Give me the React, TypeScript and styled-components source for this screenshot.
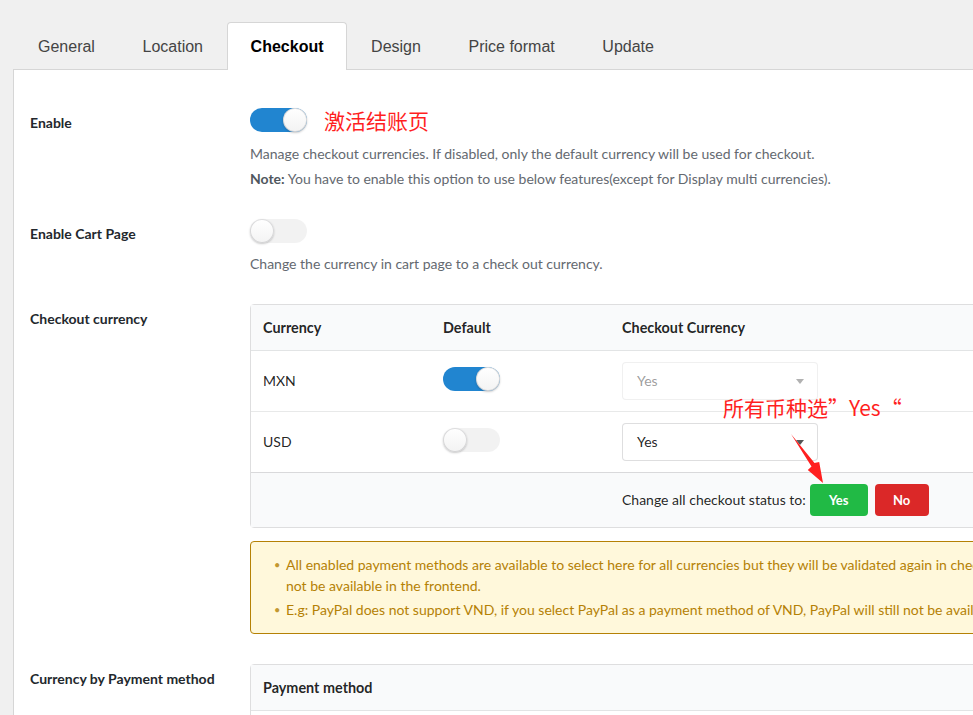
import React from "react";
import styled, {createGlobalStyle} from "styled-components";

const GlobalStyle = createGlobalStyle`
body{
  margin: 0;
  background: #f0f0f0;
  overflow: hidden;
  font-family: Lato, "Noto Sans", sans-serif;
  font-size: 14px;
  color: #23282d;
}
*{box-sizing: border-box;}
`;

const Page = styled.div`
width: 1400px;
padding: 22px 0 0 13px;
`;

const TabBar = styled.ul`
display: flex;
margin: 0 0 -1px;
padding: 0 0 0 1px;
list-style: none;
position: relative;
z-index: 1;
`;

const Tab = styled.li<{$active?: boolean}>`
height: 48px;
padding: 0 22.6px 0 23px;
display: flex;
align-items: center;
font-family: "Liberation Sans", Arial, sans-serif;
font-size: 16px;
color: ${p => p.$active ? "#000" : "#444"};
font-weight: ${p => p.$active ? 700 : 400};
background: ${p => p.$active ? "#fff" : "transparent"};
border: 1px solid ${p => p.$active ? "#d6d6d6" : "transparent"};
border-bottom: none;
border-radius: 4px 4px 0 0;
`;

const Panel = styled.div`
background: #fff;
border: 1px solid #d6d6d6;
padding: 38px 16px 60px;
display: flex;
flex-direction: column;
gap: 30px;
`;

const FieldRow = styled.div`
display: grid;
grid-template-columns: 220px 1fr;
`;

const Label = styled.div`
margin-top: 5px;
font-weight: 700;
font-size: 14px;
line-height: 20px;
color: #23282d;
`;

const Field = styled.div`
display: flex;
flex-direction: column;
`;

const ToggleLine = styled.div`
display: flex;
align-items: center;
height: 24px;
gap: 17px;
`;

const Toggle = styled.span<{$on?: boolean}>`
position: relative;
display: inline-block;
flex: none;
width: 57px;
height: 24px;
border-radius: 12px;
background: ${p => p.$on ? "#2185d0" : "rgba(0,0,0,.05)"};
&::after{
  content: "";
  position: absolute;
  top: 0;
  left: ${p => p.$on ? "33px" : "0"};
  width: 24px;
  height: 24px;
  border-radius: 50%;
  background: linear-gradient(#fff, #f3f3f3);
  box-shadow: 0 1px 2px 0 rgba(34,36,38,.25), 0 0 0 1px rgba(34,36,38,.15) inset;
}
`;

const Annotation = styled.span`
font-family: "Noto Sans CJK SC", sans-serif;
font-size: 21px;
line-height: 28px;
color: #ff1f1f;
white-space: nowrap;
`;

const FloatingNote = styled(Annotation)`
position: absolute;
left: 473px;
top: 89px;
`;

const Arrow = styled.svg`
position: absolute;
left: 535px;
top: 124px;
`;

const Desc = styled.p<{$top?: number}>`
margin: ${p => p.$top ?? 5}px 0 0;
line-height: 20px;
color: #646970;
b{color: #50575e;}
`;

const TableWrap = styled.div`
position: relative;
`;

const Table = styled.table`
width: 100%;
border-collapse: separate;
border-spacing: 0;
border: 1px solid rgba(34,36,38,.15);
border-radius: 4px;
color: rgba(0,0,0,.87);
th{
  text-align: left;
  background: #f9fafb;
  font-weight: 700;
  font-size: 14.4px;
  padding: 13px 12px;
  line-height: 19px;
  border-bottom: 1px solid rgba(34,36,38,.1);
}
td{
  padding: 11px 12px;
  line-height: 20px;
  vertical-align: middle;
}
tbody tr + tr td{
  border-top: 1px solid rgba(34,36,38,.1);
}
tfoot td{
  background: #f9fafb;
  border-top: 1px solid rgba(34,36,38,.15);
}
`;

const Select = styled.div<{$disabled?: boolean}>`
position: relative;
width: 196px;
height: 38px;
padding: 0 14px;
display: flex;
align-items: center;
border: 1px solid rgba(34,36,38,.15);
border-radius: 4px;
background: #fff;
color: rgba(0,0,0,.87);
opacity: ${p => p.$disabled ? .45 : 1};
&::after{
  content: "";
  position: absolute;
  right: 13px;
  top: 16px;
  border-left: 4px solid transparent;
  border-right: 4px solid transparent;
  border-top: 5px solid #555;
}
`;

const BulkBar = styled.div`
display: flex;
align-items: center;
gap: 4px;
`;

const Button = styled.button<{$color: string; $width: number}>`
height: 32px;
width: ${p => p.$width}px;
padding: 0;
border: none;
border-radius: 4px;
background: ${p => p.$color};
color: #fff;
font-family: Lato, sans-serif;
font-size: 13px;
font-weight: 700;
& + &{margin-left: 3px;}
`;

const Warning = styled.div`
margin-top: 13px;
background: #fff8db;
color: #b58105;
border: 1px solid #b58105;
border-radius: 4px;
padding: 12px 14px 13px;
ul{
  margin: 0;
  padding-left: 21px;
  list-style: none;
}
li{
  position: relative;
  line-height: 21px;
  white-space: nowrap;
}
li + li{margin-top: 3px;}
li::before{
  content: "•";
  position: absolute;
  left: -12px;
  opacity: .8;
  font-size: 11px;
}
`;

const tabs = ["General", "Location", "Checkout", "Design", "Price format", "Update"];
const currencies = [
    {code: "MXN", isDefault: true},
    {code: "USD", isDefault: false},
];

function App() {
    return (
        <Page>
            <GlobalStyle/>
            <TabBar>
                {tabs.map(t => <Tab key={t} $active={t === "Checkout"}>{t}</Tab>)}
            </TabBar>
            <Panel>
                <FieldRow>
                    <Label>Enable</Label>
                    <Field>
                        <ToggleLine>
                            <Toggle $on/>
                            <Annotation>激活结账页</Annotation>
                        </ToggleLine>
                        <Desc $top={12}>Manage checkout currencies. If disabled, only the default currency will be used for checkout.</Desc>
                        <Desc><b>Note:</b> You have to enable this option to use below features(except for Display multi currencies).</Desc>
                    </Field>
                </FieldRow>
                <FieldRow>
                    <Label>Enable Cart Page</Label>
                    <Field>
                        <ToggleLine><Toggle/></ToggleLine>
                        <Desc $top={11}>Change the currency in cart page to a check out currency.</Desc>
                    </Field>
                </FieldRow>
                <FieldRow>
                    <Label>Checkout currency</Label>
                    <Field>
                        <TableWrap>
                            <Table>
                                <thead>
                                <tr>
                                    <th style={{width: 180}}>Currency</th>
                                    <th style={{width: 179}}>Default</th>
                                    <th>Checkout Currency</th>
                                </tr>
                                </thead>
                                <tbody>
                                {currencies.map(c => (
                                    <tr key={c.code}>
                                        <td>{c.code}</td>
                                        <td><Toggle $on={c.isDefault}/></td>
                                        <td><Select $disabled={c.isDefault}>Yes</Select></td>
                                    </tr>
                                ))}
                                </tbody>
                                <tfoot>
                                <tr>
                                    <td/>
                                    <td/>
                                    <td>
                                        <BulkBar>
                                            Change all checkout status to:
                                            <Button $color="#21ba45" $width={58}>Yes</Button>
                                            <Button $color="#db2828" $width={54}>No</Button>
                                        </BulkBar>
                                    </td>
                                </tr>
                                </tfoot>
                            </Table>
                            <FloatingNote>所有币种选”Yes“</FloatingNote>
                            <Arrow width="45" height="56" viewBox="0 0 45 56">
                                <polygon points="6,6 29.5,35 34.2,34 38,55 22.8,42 26.5,38.5" fill="#ff1f1f"/>
                            </Arrow>
                        </TableWrap>
                        <Warning>
                            <ul>
                                <li>All enabled payment methods are available to select here for all currencies but they will be validated again in checkout page, so some of them may<br/>not be available in the frontend.</li>
                                <li>E.g: PayPal does not support VND, if you select PayPal as a payment method of VND, PayPal will still not be available in checkout page.</li>
                            </ul>
                        </Warning>
                    </Field>
                </FieldRow>
                <FieldRow>
                    <Label>Currency by Payment method</Label>
                    <Field>
                        <Table>
                            <thead>
                            <tr><th>Payment method</th></tr>
                            </thead>
                            <tbody>
                            <tr><td>Direct bank transfer</td></tr>
                            </tbody>
                        </Table>
                    </Field>
                </FieldRow>
            </Panel>
        </Page>
    );
}

export default App;
